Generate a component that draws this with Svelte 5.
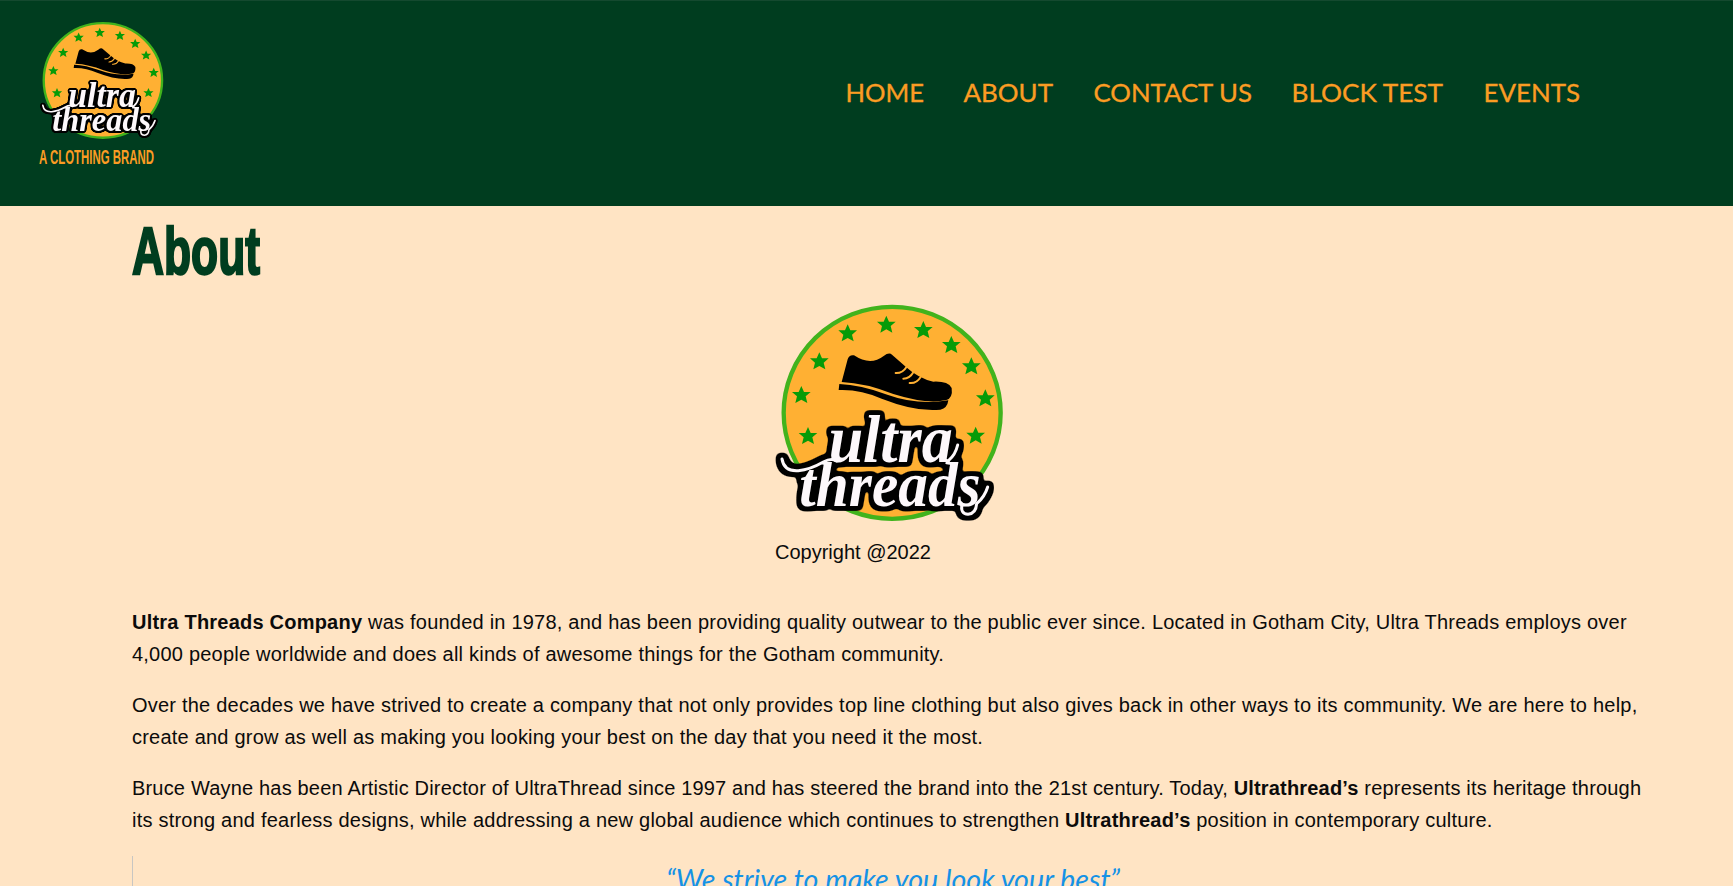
<script>
  const links = [
    { label: 'HOME', width: 77 },
    { label: 'ABOUT', width: 88 },
    { label: 'CONTACT US', width: 157 },
    { label: 'BLOCK TEST', width: 150 },
    { label: 'EVENTS', width: 95 }
  ];

  const stars = [
    [144, 439], [124, 316], [178, 215], [263, 131], [379, 105], [490, 121],
    [574, 166], [634, 230], [676, 326], [647, 438]
  ];
</script>

{#snippet logo(id)}
  <svg class="logo" viewBox="45 40 660 660" preserveAspectRatio="none" role="img" aria-label="ultra threads">
    <filter {id} filterUnits="userSpaceOnUse" x="0" y="320" width="750" height="400" color-interpolation-filters="sRGB">
      <feMorphology in="SourceAlpha" operator="dilate" radius="8" />
      <feGaussianBlur stdDeviation="6" />
      <feComponentTransfer result="edge">
        <feFuncA type="linear" slope="7" intercept="-0.9" />
      </feComponentTransfer>
      <feMerge>
        <feMergeNode in="edge" />
        <feMergeNode in="SourceGraphic" />
      </feMerge>
    </filter>
    <ellipse cx="396.500" cy="369.500" rx="325.500" ry="318" fill="#ffb033" stroke="#41b31c" stroke-width="13" />
    {#each stars as [x, y]}
      <path
        transform="translate({x} {y})"
        fill="#069b08"
        d="M0-27 8-9 28-9 13 4 18 24 0 14-18 24-13 4-28-9-8-9Z"
      />
    {/each}
    <path d="M245 277 263 209Q268 194 282 197 331 230 371 199 387 187 396 195L438 232Q475 266 520 276 564 274 575 295 579 325 559 331 502 345 400 313 316 280 245 277Z" />
    <path d="M238 283Q300 285 382 315 470 347 565 332 562 356 541 360 470 368 365 327 300 298 236 301Z" />
    <path class="laces" d="M440 231Q428 251 407 250M461 246Q449 267 430 267M482 262Q470 282 449 280" />
    <g class="script" filter="url(#{id})">
      <text x="206" y="517" font-size="204" textLength="372" lengthAdjust="spacingAndGlyphs">ultra</text>
      <text x="118" y="650" font-size="190" textLength="544" lengthAdjust="spacingAndGlyphs">threads</text>
      <path d="M66 508Q72 546 115 543 150 540 190 517 214 504 230 514" />
      <path d="M606 644Q600 672 624 674 648 672 650 642 674 622 683 592" />
      <path d="M566 512Q586 496 593 466" />
    </g>
  </svg>
{/snippet}

<header>
  <div class="brand">
    {@render logo('edge-small')}
    <svg class="tagline" width="118" height="24">
      <text x="0" y="19" textLength="115" lengthAdjust="spacingAndGlyphs">A CLOTHING BRAND</text>
    </svg>
  </div>
  <nav>
    {#each links as link}
      <svg width={link.width} height="32">
        <text x="-1.500" y="25" textLength={link.width + 1.5} lengthAdjust="spacingAndGlyphs">{link.label}</text>
      </svg>
    {/each}
  </nav>
</header>

<main>
  <h1>
    <svg width="140" height="76">
      <text x="0" y="59.500" textLength="128" lengthAdjust="spacingAndGlyphs">About</text>
    </svg>
  </h1>
  <figure>
    {@render logo('edge-large')}
    <figcaption>Copyright @2022</figcaption>
  </figure>
  <p>
    <b>Ultra Threads Company</b> was founded in 1978, and has been providing quality outwear to the public ever since. Located in Gotham City, Ultra Threads employs over<br />4,000 people worldwide and does all kinds of awesome things for the Gotham community.
  </p>
  <p>
    Over the decades we have strived to create a company that not only provides top line clothing but also gives back in other ways to its community. We are here to help,<br />create and grow as well as making you looking your best on the day that you need it the most.
  </p>
  <p>
    <span class="tight">Bruce Wayne has been Artistic Director of UltraThread since 1997 and has steered the brand into the 21st century. Today, <b>Ultrathread’s</b> represents its heritage through</span><br />its strong and fearless designs, while addressing a new global audience which continues to strengthen <b>Ultrathread’s</b> position in contemporary culture.
  </p>
  <blockquote>
    <svg width="454" height="44">
      <text x="0" y="34" textLength="454" lengthAdjust="spacingAndGlyphs">“We strive to make you look your best”</text>
    </svg>
  </blockquote>
</main>

<style>
  :global(html),
  :global(body) {
    background: #ffe4c4;
    overflow: hidden;
  }

  :global(#app) {
    height: 886px;
    overflow: hidden;
  }

  svg {
    display: block;
    overflow: visible;
  }

  header {
    box-sizing: border-box;
    height: 206px;
    display: flex;
    justify-content: space-between;
    align-items: flex-start;
    background: #003d1f;
    border-top: 1px solid #14492f;
    padding: 19.5px 153.5px 0 39px;
  }

  .brand .logo {
    width: 120px;
    height: 119px;
  }

  .tagline {
    margin-top: 5.5px;
    margin-left: 0;
  }

  .tagline text {
    font: 700 20px 'Liberation Sans', sans-serif;
    fill: #fb9c23;
  }

  nav {
    display: flex;
    gap: 41.4px;
    padding-top: 56.2px;
  }

  nav text {
    font: 400 24.3px Lato, sans-serif;
    fill: #fb9c23;
    stroke: #fb9c23;
    stroke-width: 0.3px;
  }

  main {
    padding: 8px 80px 0 132px;
    color: #0b0b0b;
    font: 20px/32px 'Liberation Sans', Arial, sans-serif;
    letter-spacing: 0.22px;
  }

  h1 {
    margin: 0;
    letter-spacing: 0;
  }

  h1 text {
    font: 700 67px 'Liberation Sans', sans-serif;
    fill: #003d1f;
    stroke: #003d1f;
    stroke-width: 2.4px;
  }

  figure {
    width: 235px;
    margin: 13px auto 0;
    letter-spacing: 0;
  }

  figure .logo {
    width: 220px;
    height: 220px;
  }

  figcaption {
    margin-top: 13px;
  }

  p {
    margin: 0 0 19px;
    white-space: nowrap;
  }

  .tight {
    letter-spacing: 0.18px;
  }

  figure + p {
    margin-top: 38px;
  }

  blockquote {
    margin: 20px 0 0;
    height: 120px;
    border-left: 1px solid #c8c6c2;
    display: flex;
    justify-content: center;
    letter-spacing: 0;
  }

  blockquote text {
    font: italic 400 28px Lato, sans-serif;
    fill: #1592e6;
  }

  .laces {
    fill: none;
    stroke: #ffb033;
    stroke-width: 6;
    stroke-linecap: round;
  }

  .script {
    font-family: 'Liberation Serif', serif;
    font-weight: 700;
    font-style: italic;
    letter-spacing: 0;
    fill: #fdf8fb;
  }

  .script path {
    fill: none;
    stroke: #fdf8fb;
    stroke-width: 9;
    stroke-linecap: round;
    stroke-linejoin: round;
  }
</style>
